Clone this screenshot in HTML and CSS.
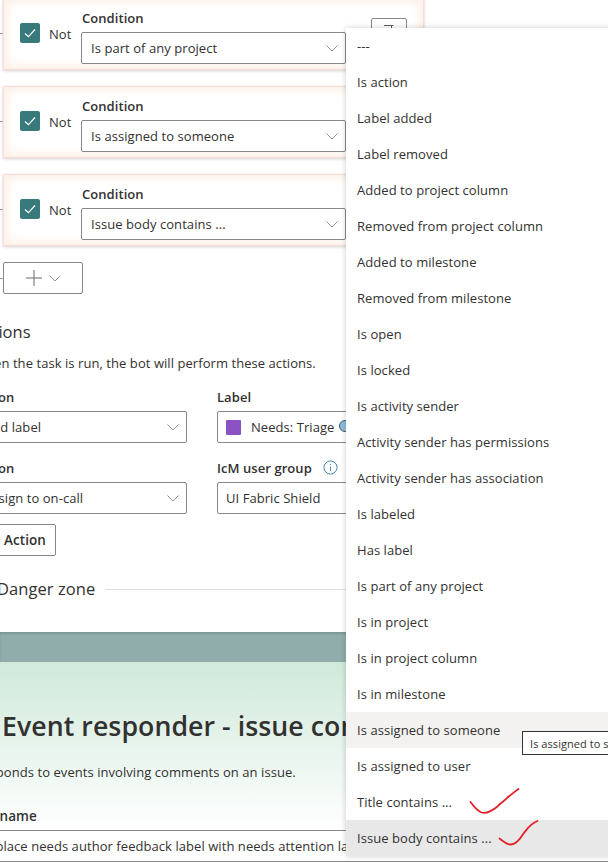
FILE: index.html
```html
<!DOCTYPE html>
<html lang="en">

<head>
    <meta charset="UTF-8">
    <title>Task editor</title>
    <link rel="stylesheet" href="styles.css">
</head>

<body>
    <div class="conditions">
        <div class="card">
            <span class="tick"></span>
            <div class="checkbox"><svg viewBox="0 0 20 20"><path d="M5 10.5l3.5 3.2L15 6.5"/></svg></div>
            <span class="not">Not</span>
            <div class="field">
                <label>Condition</label>
                <div class="select">Is part of any project<svg class="chev" viewBox="0 0 12 7"><path d="M.5.5L6 6 11.5.5"/></svg></div>
            </div>
            <div class="delete"><svg viewBox="0 0 14 8"><path d="M2 1.500h9.500M9.500 1.500v4"/></svg></div>
        </div>
        <div class="card">
            <span class="tick"></span>
            <div class="checkbox"><svg viewBox="0 0 20 20"><path d="M5 10.5l3.5 3.2L15 6.5"/></svg></div>
            <span class="not">Not</span>
            <div class="field">
                <label>Condition</label>
                <div class="select">Is assigned to someone<svg class="chev" viewBox="0 0 12 7"><path d="M.5.5L6 6 11.5.5"/></svg></div>
            </div>
        </div>
        <div class="card">
            <span class="tick"></span>
            <div class="checkbox"><svg viewBox="0 0 20 20"><path d="M5 10.5l3.5 3.2L15 6.5"/></svg></div>
            <span class="not">Not</span>
            <div class="field">
                <label>Condition</label>
                <div class="select">Issue body contains ...<svg class="chev" viewBox="0 0 12 7"><path d="M.5.5L6 6 11.5.5"/></svg></div>
            </div>
        </div>
        <div class="add-btn">
            <span class="tick"></span>
            <svg class="plus" viewBox="0 0 16 16"><path d="M8 0v16M0 8h16"/></svg>
            <svg class="chev" viewBox="0 0 12 7"><path d="M.5.5L6 6 11.5.5"/></svg>
        </div>
    </div>

    <div class="actions">
        <h2>Actions</h2>
        <p>When the task is run, the bot will perform these actions.</p>
        <div class="action-grid">
            <div class="field">
                <label>Action</label>
                <div class="select">Add label<svg class="chev" viewBox="0 0 12 7"><path d="M.5.5L6 6 11.5.5"/></svg></div>
            </div>
            <div class="field">
                <label>Label</label>
                <div class="select select-wide"><span class="swatch"></span>Needs: Triage<span class="spinner"></span></div>
            </div>
            <div class="field">
                <label>Action</label>
                <div class="select">Assign to on-call<svg class="chev" viewBox="0 0 12 7"><path d="M.5.5L6 6 11.5.5"/></svg></div>
            </div>
            <div class="field">
                <label>IcM user group <svg class="info" viewBox="0 0 16 16"><circle cx="8" cy="8" r="7"/><path d="M8 7v4.5M8 4.2v1.2"/></svg></label>
                <div class="select select-wide">UI Fabric Shield</div>
            </div>
        </div>
        <div class="action-btn">+ Action</div>
        <div class="danger"><span>Danger zone</span><i></i></div>
    </div>

    <div class="band"></div>
    <div class="responder">
        <h1>Event responder - issue comments</h1>
        <p>This task responds to events involving comments on an issue.</p>
        <div class="col-name">Task name</div>
        <div class="row">Replace needs author feedback label with needs attention label</div>
    </div>

    <ul class="menu">
        <li>---</li>
        <li>Is action</li>
        <li>Label added</li>
        <li>Label removed</li>
        <li>Added to project column</li>
        <li>Removed from project column</li>
        <li>Added to milestone</li>
        <li>Removed from milestone</li>
        <li>Is open</li>
        <li>Is locked</li>
        <li>Is activity sender</li>
        <li>Activity sender has permissions</li>
        <li>Activity sender has association</li>
        <li>Is labeled</li>
        <li>Has label</li>
        <li>Is part of any project</li>
        <li>Is in project</li>
        <li>Is in project column</li>
        <li>Is in milestone</li>
        <li class="hover">Is assigned to someone</li>
        <li>Is assigned to user</li>
        <li>Title contains ...</li>
        <li class="current">Issue body contains ...</li>
    </ul>
    <div class="tooltip">Is assigned to someone</div>

    <!-- hand drawn marks on top of the screenshot -->
    <svg class="marks" viewBox="0 0 608 862">
        <path d="M470.5 802c3 4 7 9 11 10.500 5 1.500 11-2 16-6 3-4 8-6 10-9 4-3 7-6 11-8.500"/>
        <path d="M499.500 838.500c3 2 7 6 11 6 5 0 10-6 13-11 4-5 7-10 14-12.500"/>
    </svg>
</body>

</html>
```

FILE: styles.css
```css
* {
    box-sizing: border-box;
}

html,
body {
    margin: 0;
    padding: 0;
    height: 862px;
    overflow: hidden;
    background-color: white;
}

body {
    position: relative;
    font-family: "Open Sans", "Noto Sans", sans-serif;
    font-size: 13px;
    letter-spacing: 0.06px;
    color: #323130;
}

label {
    display: block;
    font-weight: 600;
    line-height: 18px;
    margin-bottom: 5px;
}

.conditions {
    margin-top: -2px;
    padding-left: 3px;
}

.card {
    position: relative;
    display: flex;
    align-items: flex-start;
    width: 421px;
    height: 72px;
    margin-bottom: 16px;
    padding: 10px 0 0 16px;
    background-color: white;
    border: 1px solid #fbdcd8;
    box-shadow: inset 0 0 8px 4px #fdf0e7, 0 1px 3px rgba(0, 0, 0, 0.18);
}

.card label {
    padding-left: 1px;
}

.tick {
    position: absolute;
    left: -4px;
    top: 34px;
    width: 3px;
    height: 1px;
    background-color: #a19f9d;
}

.checkbox {
    width: 20px;
    height: 20px;
    margin-top: 14px;
    background-color: #38797c;
    border-radius: 2px;
}

.checkbox svg {
    display: block;
}

.checkbox path {
    fill: none;
    stroke: white;
    stroke-width: 1.2;
}

.not {
    width: 41px;
    margin-top: 16px;
    padding-left: 9px;
    line-height: 18px;
}

.field {
    width: 265px;
}

.select {
    position: relative;
    height: 32px;
    padding-left: 9px;
    line-height: 31px;
    background-color: white;
    border: 1px solid #8a8886;
    border-radius: 2px;
    white-space: nowrap;
}

.chev {
    width: 12px;
    height: 7px;
    fill: none;
    stroke: #979593;
}

.select .chev {
    position: absolute;
    right: 7px;
    top: 12px;
}

.delete {
    position: absolute;
    left: 367px;
    top: 19px;
    width: 36px;
    height: 32px;
    border: 1px solid #8a8886;
    border-radius: 2px;
}

.delete svg {
    display: block;
    width: 14px;
    height: 8px;
    margin: 5px auto 0;
    fill: none;
    stroke: #605e5c;
}

.add-btn {
    position: relative;
    display: flex;
    align-items: center;
    justify-content: center;
    gap: 7px;
    width: 80px;
    height: 32px;
    border: 1px solid #8a8886;
    border-radius: 2px;
}

.add-btn .tick {
    top: 15px;
}

.plus {
    width: 16px;
    height: 16px;
    fill: none;
    stroke: #6b6967;
}

.actions {
    margin-left: -26px;
}

.actions h2 {
    margin: 26px 0 0;
    font-size: 16.5px;
    font-weight: 400;
    line-height: 24px;
}

.actions p {
    margin: 10px 0 0;
    line-height: 18px;
}

.action-grid {
    display: grid;
    grid-template-columns: 213px 300px;
    column-gap: 30px;
    row-gap: 16px;
    margin-top: 16px;
}

.action-grid .field {
    width: auto;
}

.select-wide {
    padding-left: 8px;
}

.swatch {
    display: inline-block;
    width: 15px;
    height: 15px;
    margin-right: 10px;
    vertical-align: -3px;
    background-color: #8b52c4;
    border-radius: 1px;
}

.spinner {
    display: inline-block;
    width: 12px;
    height: 12px;
    margin-left: 5px;
    background-color: #8fbde0;
    border: 1.5px solid #44586a;
    border-radius: 50%;
}

.info {
    width: 15px;
    height: 15px;
    margin-left: 8px;
    vertical-align: -2px;
    fill: none;
    stroke: #3d7fa8;
}

.action-btn {
    width: 82px;
    height: 32px;
    margin-top: 10px;
    padding-right: 9px;
    font-size: 13.5px;
    font-weight: 600;
    line-height: 30px;
    text-align: right;
    border: 1px solid #8a8886;
    border-radius: 2px;
}

.danger {
    display: flex;
    align-items: center;
    gap: 10px;
    margin-top: 21px;
    padding-left: 24px;
    font-size: 16.5px;
    line-height: 24px;
}

.danger span {
    margin-left: -1px;
}

.danger i {
    flex: 1;
    height: 1px;
    background-color: #e1dfdd;
}

.band {
    height: 30px;
    margin-top: 31px;
    background-color: #90adab;
    box-shadow: inset 0 2px 2px rgba(0, 0, 0, 0.12);
}

.responder {
    height: 200px;
    margin-left: -80px;
    background: linear-gradient(#cfe9da, white 168px);
}

.responder h1 {
    margin: 0;
    padding: 44px 0 0 82px;
    font-size: 26.7px;
    font-weight: 600;
    line-height: 40px;
    white-space: nowrap;
}

.responder p {
    margin: 16px 0 0;
    line-height: 20px;
    white-space: nowrap;
}

.col-name {
    margin-top: 24px;
    padding-left: 46px;
    padding-bottom: 4px;
    font-size: 13.5px;
    font-weight: 600;
    line-height: 20px;
}

.row {
    padding: 6px 0 6px 60px;
    line-height: 18px;
    white-space: nowrap;
    border-top: 1px solid #8a8886;
    border-bottom: 1px solid #8a8886;
}

.menu {
    position: absolute;
    left: 346px;
    top: 28px;
    width: 270px;
    margin: 0;
    padding: 0;
    list-style: none;
    background-color: white;
    box-shadow: 0 0 6px rgba(0, 0, 0, 0.2);
}

.menu li {
    height: 36px;
    padding-left: 11px;
    line-height: 36px;
}

.menu .hover {
    background-color: #f3f2f1;
}

.menu .current {
    background-color: #e8e8e8;
}

.tooltip {
    position: absolute;
    left: 522px;
    top: 731px;
    width: 140px;
    height: 24px;
    padding-left: 7px;
    font-size: 11px;
    line-height: 24px;
    white-space: nowrap;
    background-color: white;
    border: 1px solid #333;
}

.marks {
    position: absolute;
    left: 0;
    top: 0;
    width: 608px;
    height: 862px;
    fill: none;
    stroke: #e3202a;
    stroke-width: 1.8;
    stroke-linecap: round;
}
```
